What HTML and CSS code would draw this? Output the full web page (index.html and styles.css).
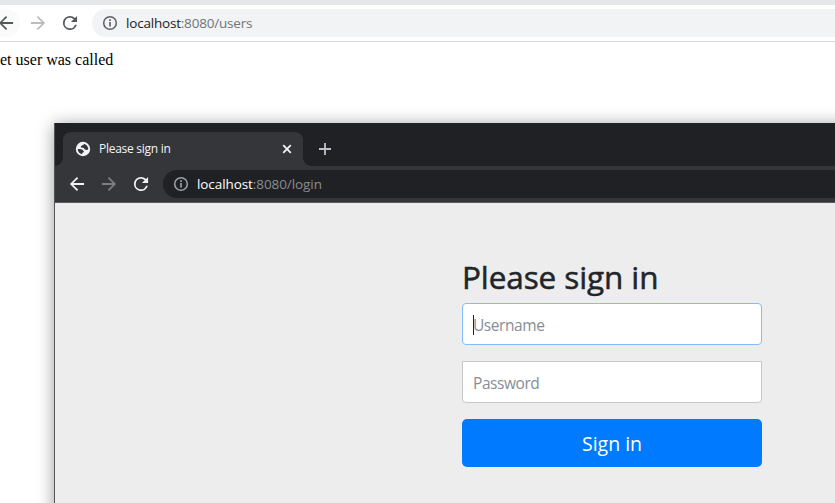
FILE: index.html
```html
<!DOCTYPE html>
<html lang="en">
<head>
<meta charset="utf-8">
<title>Users</title>
<link rel="stylesheet" href="styles.css">
</head>
<body>
<svg class="defs" width="0" height="0">
  <symbol id="back" viewBox="0 0 24 24"><path d="M20 11H7.83l5.59-5.59L12 4l-8 8 8 8 1.41-1.41L7.83 13H20v-2z"/></symbol>
  <symbol id="forward" viewBox="0 0 24 24"><path d="M12 4l-1.41 1.41L16.17 11H4v2h12.17l-5.58 5.59L12 20l8-8z"/></symbol>
  <symbol id="reload" viewBox="0 0 24 24"><path d="M17.65 6.35A7.96 7.96 0 0 0 12 4a8 8 0 1 0 7.73 10h-2.08A6 6 0 1 1 12 6c1.66 0 3.14.69 4.22 1.78L13 11h7V4l-2.35 2.35z"/></symbol>
  <symbol id="info" viewBox="0 0 24 24"><path d="M10.8 10.5h2.4V17h-2.4zM10.8 6.800h2.400v2.300h-2.400zM12 2a10 10 0 1 0 0 20 10 10 0 0 0 0-20zm0 17.800a7.800 7.800 0 1 1 0-15.600 7.800 7.800 0 0 1 0 15.600z"/></symbol>
</svg>
<main class="desktop">
  <section class="outer">
    <div class="strip"></div>
    <header class="bar">
      <span class="nav hovered"><svg><use href="#back"/></svg></span>
      <span class="nav disabled"><svg><use href="#forward"/></svg></span>
      <span class="nav"><svg><use href="#reload"/></svg></span>
      <div class="address"><svg><use href="#info"/></svg><span class="url"><b>localhost</b>:8080/users</span></div>
    </header>
    <p class="message">et user was called</p>
  </section>
  <section class="window">
    <div class="tabs">
      <div class="tab">
        <svg class="globe" viewBox="0 0 16 16"><circle cx="8" cy="8" r="7.200" fill="#f1f3f4"/><path d="M9.200 2.700C9 3.800 7.800 3.700 7.300 4.300 6.900 5 5.700 4.900 5.800 6c.1 1 1.700.7 2.700.9 1 .3.700 1.500 1.700 1.700 1 .2 1.100.5 1.600.5.700 0 1.100-.6 1.500-1C13.300 5.700 11.700 3.600 9.200 2.700zM2.700 8.100c1.400.2 3.200-.1 4.300.5 1 .5.900 1.100 1.700 1.400.6.500.1 1.300-.7 1.500-.9.200-.7.900-.8 1.700C4.500 13 2.700 10.700 2.700 8.100z" fill="#35363a"/></svg>
        <span class="title">Please sign in</span>
        <svg class="close" viewBox="0 0 10 10"><path d="M1.200 1.200l7.600 7.600M8.800 1.200L1.200 8.800"/></svg>
      </div>
      <svg class="plus" viewBox="0 0 12 12"><path d="M6 0v12M0 6h12"/></svg>
    </div>
    <header class="bar dark">
      <span class="nav"><svg><use href="#back"/></svg></span>
      <span class="nav disabled"><svg><use href="#forward"/></svg></span>
      <span class="nav"><svg><use href="#reload"/></svg></span>
      <div class="address"><svg><use href="#info"/></svg><span class="url"><b>localhost</b>:8080/login</span></div>
    </header>
    <form class="login">
      <h1>Please sign in</h1>
      <div class="field focused"><i class="caret"></i><span>Username</span></div>
      <div class="field second"><span>Password</span></div>
      <button type="button">Sign in</button>
    </form>
  </section>
</main>
</body>
</html>
```

FILE: styles.css
```css
* { box-sizing: border-box; }
body { margin: 0; overflow: hidden; background: #fff; font-family: "Open Sans", "Noto Sans", sans-serif; }
svg { display: block; flex: none; }
.defs { position: absolute; }
.desktop { position: relative; width: 835px; height: 503px; overflow: hidden; }
.strip { height: 5px; background: #e4e8eb; }
.bar { display: flex; align-items: center; height: 37px; padding-bottom: 1px; border-bottom: 1px solid #d8dadc; color: #54585d; }
.nav { display: flex; flex: none; align-items: center; justify-content: center; width: 28px; height: 28px; margin-right: 4px; border-radius: 50%; }
.nav svg { width: 22px; height: 22px; padding: .4px; fill: currentColor; }
.outer .nav:first-child { margin-left: -8px; }
.hovered { background: #fafafa; }
.disabled { color: #bbbcbe; }
.address { display: flex; flex: 1; align-items: center; height: 28px; margin-left: 4px; padding-left: 9px; border-radius: 14px 0 0 14px; background: #f1f3f4; color: #5f6368; }
.address svg { width: 18px; height: 18px; padding: .5px; fill: currentColor; }
.url { margin-left: 7px; font-size: 13.500px; letter-spacing: -0.200px; line-height: 20px; white-space: nowrap; color: #70757a; }
.url b { font-weight: 400; color: #202124; }
.message { margin: 9px 0 0; font: 16px/18px "Liberation Serif", serif; color: #000; }

.window { position: absolute; left: 54px; top: 123px; width: 800px; height: 400px; border-left: 1px solid #55565a; background: #ededed; box-shadow: 0 2px 16px rgba(0, 0, 0, .4); }
.tabs { display: flex; height: 43px; padding: 9px 0 0 8px; background: #202124; }
.tab { position: relative; display: flex; align-items: center; width: 240px; height: 34px; padding: 0 11px 0 12px; border-radius: 8px 8px 0 0; background: #35363a; }
.tab::before, .tab::after { content: ""; position: absolute; bottom: 0; width: 8px; height: 8px; }
.tab::before { right: 100%; background: radial-gradient(circle at 0 0, #202124 7.500px, #35363a 8px); }
.tab::after { left: 100%; background: radial-gradient(circle at 100% 0, #202124 7.500px, #35363a 8px); }
.globe { width: 16px; height: 16px; }
.title { flex: 1; margin-left: 8px; padding-bottom: 1px; font-size: 12px; letter-spacing: -0.270px; color: #f4f5f6; white-space: nowrap; }
.close { width: 10px; height: 10px; fill: none; stroke: #f1f3f4; stroke-width: 1.800; }
.plus { width: 12px; height: 12px; margin: 11px 0 0 16px; fill: none; stroke: #bdc1c6; stroke-width: 1.800; }
.dark { padding-left: 8px; background: #35363a; border-color: #5a5b5e; color: #f1f3f4; }
.dark .disabled { color: #7d7e81; }
.dark .address { background: #202124; color: #9aa0a6; }
.dark .url { letter-spacing: -0.080px; color: #898d92; }
.dark .url b { color: #fff; }

.login { width: 300px; margin: 55px 0 0 407px; }
h1 { margin: 0 0 7px; font-size: 31.500px; font-weight: 500; line-height: 38px; letter-spacing: -0.100px; color: #212529; -webkit-text-stroke: .5px #212529; white-space: nowrap; }
.field { display: flex; align-items: center; height: 42px; padding: 1px 10px 0; border: 1px solid #ced4da; border-radius: 4px; background: #fff; color: #868e96; font-size: 15.500px; letter-spacing: -0.430px; }
.focused { border-color: #80bdff; }
.second { margin-top: 16px; border-color: #c8c8c8; border-radius: 0 0 4px 4px; }
.caret { width: 1px; height: 20px; margin-right: -1px; background: #222; }
button { display: block; width: 300px; height: 48px; margin-top: 16px; padding: 1px 0 0; border: 0; border-radius: 5px; background: #007bff; color: #fff; font: 19.500px/47px "Open Sans", sans-serif; }
```
